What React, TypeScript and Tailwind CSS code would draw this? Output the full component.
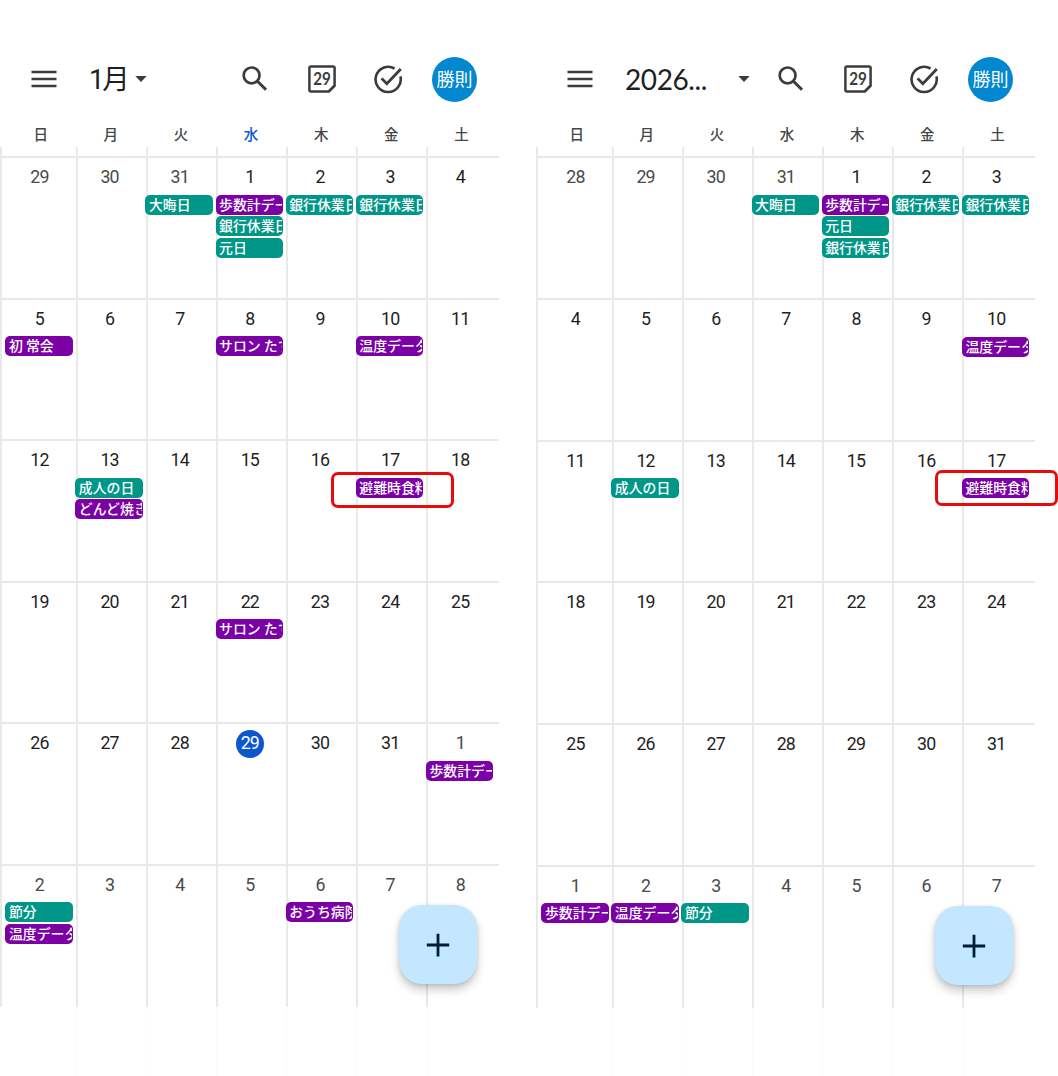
import React from "react";
import clsx from "clsx";

type EventColor = "green" | "purple";

interface CalendarEvent {
  title: string;
  color: EventColor;
}

interface Day {
  date: number;
  muted?: boolean;
  today?: boolean;
  events?: CalendarEvent[];
}

const weekdays = ["日", "月", "火", "水", "木", "金", "土"];

const green = (title: string): CalendarEvent => ({ title, color: "green" });
const purple = (title: string): CalendarEvent => ({ title, color: "purple" });

// Builds the six visible weeks: the tail of the previous month, the month
// itself, then the first days of the next one.
const buildWeeks = (
  leading: number[],
  length: number,
  trailing: number,
  events: Record<number, CalendarEvent[]>,
  today?: number
): Day[][] => {
  const dates = [
    ...leading.map((date) => ({ date, muted: true })),
    ...Array.from({ length }, (_, i) => ({ date: i + 1, muted: false })),
    ...Array.from({ length: trailing }, (_, i) => ({
      date: i + 1,
      muted: true,
    })),
  ];
  const days = dates.map((day, i) => ({
    ...day,
    today: !day.muted && day.date === today,
    events: events[i],
  }));
  return Array.from({ length: 6 }, (_, w) => days.slice(w * 7, w * 7 + 7));
};

// Events are keyed by cell index, counted from the top left
const january2025 = buildWeeks(
  [29, 30, 31],
  31,
  8,
  {
    2: [green("大晦日")],
    3: [purple("歩数計データ"), green("銀行休業日"), green("元日")],
    4: [green("銀行休業日")],
    5: [green("銀行休業日")],
    7: [purple("初 常会")],
    10: [purple("サロン たす")],
    12: [purple("温度データ")],
    15: [green("成人の日"), purple("どんど焼き")],
    19: [purple("避難時食料")],
    24: [purple("サロン たす")],
    34: [purple("歩数計データ")],
    35: [green("節分"), purple("温度データ")],
    39: [purple("おうち病院")],
  },
  29
);

const january2026 = buildWeeks([28, 29, 30, 31], 31, 7, {
  3: [green("大晦日")],
  4: [purple("歩数計データ"), green("元日"), green("銀行休業日")],
  5: [green("銀行休業日")],
  6: [green("銀行休業日")],
  13: [purple("温度データ")],
  15: [green("成人の日")],
  20: [purple("避難時食料")],
  35: [purple("歩数計データ")],
  36: [purple("温度データ")],
  37: [green("節分")],
});

const MenuIcon = () => (
  <svg width="26" height="18" viewBox="0 0 26 18" className="shrink-0">
    <path
      d="M0.5 2h25M0.5 9h25M0.5 16h25"
      stroke="#3c3c3c"
      strokeWidth="2.5"
    />
  </svg>
);

const SearchIcon = () => (
  <svg width="28" height="28" viewBox="0 0 28 28" fill="none">
    <circle cx="10.6" cy="10.4" r="7.9" stroke="#3c3c3c" strokeWidth="2.7" />
    <path d="M16.2 16 25 24.8" stroke="#3c3c3c" strokeWidth="3" />
  </svg>
);

const TodayIcon = () => (
  <svg width="28" height="28" viewBox="0 0 28 28" fill="none">
    <path
      d="M2.8 1.4h22.4a1.4 1.4 0 0 1 1.4 1.4v18l-5.8 5.8H2.8a1.4 1.4 0 0 1-1.4-1.4V2.8a1.4 1.4 0 0 1 1.4-1.4Z"
      stroke="#3c3c3c"
      strokeWidth="2.5"
      strokeLinejoin="round"
    />
    <path d="M26.5 20.2h-1.4l-5 5v1.2h1Z" fill="#3c3c3c" />
    <text
      x="5.2"
      y="19.9"
      textLength="17.6"
      lengthAdjust="spacingAndGlyphs"
      className="fill-[#3c3c3c] font-['Lato',sans-serif] text-[16.6px] font-bold"
    >
      29
    </text>
  </svg>
);

const TaskIcon = () => (
  <svg width="29" height="29" viewBox="0 0 29 29" fill="none">
    <path
      d="M20.6 3.6A12.6 12.6 0 1 0 26.4 11.4"
      stroke="#3c3c3c"
      strokeWidth="2.6"
    />
    <path
      d="M7.6 13.4 12.8 18.8 26.8 4"
      stroke="#3c3c3c"
      strokeWidth="2.8"
    />
  </svg>
);

const EventChip = ({ event }: { event: CalendarEvent }) => (
  <div
    className={clsx(
      "h-5 w-[67.5px] overflow-hidden rounded-[5px] pr-px pl-[3.5px]",
      event.color === "green" ? "bg-[#009688]" : "bg-[#7b00a6]"
    )}
  >
    <div className="overflow-hidden text-[13.9px] leading-[19px] font-medium whitespace-nowrap text-white">
      {event.title}
    </div>
  </div>
);

const DayCell = ({ day, first }: { day: Day; first: boolean }) => (
  <div className={clsx("min-w-0", !first && "border-l-2 border-[#e9e9e9]")}>
    <div
      className={clsx(
        "flex h-[36.6px] items-center justify-center pt-0.5",
        first ? "pr-[2px]" : "pr-[4px]"
      )}
    >
      <span
        className={clsx(
          "flex h-7 w-7 shrink-0 items-center justify-center rounded-full font-['Roboto',sans-serif] text-[17.8px] tracking-[-0.8px]",
          day.today
            ? "bg-[#0b57d0] text-white"
            : day.muted
              ? "text-[#4a4a4a]"
              : "text-[#1f1f1f]"
        )}
      >
        {day.date}
      </span>
    </div>
    <div className={clsx("flex flex-col gap-[1.3px]", !first && "-ml-[2.3px]")}>
      {day.events?.map((event) => (
        <EventChip key={event.title} event={event} />
      ))}
    </div>
  </div>
);

interface CalendarProps {
  title: string;
  wideTitle?: boolean;
  weeks: Day[][];
  activeWeekday?: number;
  rowClass: string;
  fabClass: string;
  highlightClass: string;
}

const Calendar: React.FC<CalendarProps> = ({
  title,
  wideTitle,
  weeks,
  activeWeekday,
  rowClass,
  fabClass,
  highlightClass,
}) => {
  return (
    <section className="relative flex h-[1076px] w-[499px] shrink-0 flex-col pt-[55px]">
      <header className="flex h-12 items-center pl-[31px]">
        <MenuIcon />
        <div
          className={clsx(
            "ml-8 flex items-center justify-between",
            wideTitle ? "w-[125px]" : "w-[58px]"
          )}
        >
          <h1
            className={clsx(
              "leading-none whitespace-nowrap text-[#1f1f1f]",
              wideTitle
                ? "font-['Lato',sans-serif] text-[28px] tracking-[-0.4px]"
                : "pt-px font-['Roboto','Noto_Sans_CJK_JP',sans-serif] text-[27.5px] tracking-[-2.2px]"
            )}
          >
            {title}
          </h1>
          <svg width="12" height="6" viewBox="0 0 12 6" className="shrink-0">
            <path d="M0.3 0h11.4L6 6Z" fill="#3c3c3c" />
          </svg>
        </div>
        <div className="mr-[22px] ml-auto flex items-center">
          <SearchIcon />
          <div className="ml-[39px]">
            <TodayIcon />
          </div>
          <div className="ml-[38px]">
            <TaskIcon />
          </div>
          <div className="ml-[29px] flex h-[45px] w-[45px] items-center justify-center rounded-full bg-[#0288d1] pb-0.5 text-[18px] whitespace-nowrap text-white">
            勝則
          </div>
        </div>
      </header>

      <div className="grid h-11 grid-cols-[repeat(7,70.15px)] pl-[5.6px] text-center text-[14.5px] leading-[61px] font-medium">
        {weekdays.map((weekday, i) => (
          <div
            key={weekday}
            className={i === activeWeekday ? "text-[#0b57d0]" : "text-[#444746]"}
          >
            {weekday}
          </div>
        ))}
      </div>

      <div className="w-[499px] border-l-2 border-[#e9e9e9]">
        <div className="grid h-[9.4px] grid-cols-[repeat(7,70.15px)] pl-[3.4px]">
          {weekdays.map((weekday, i) => (
            <div
              key={weekday}
              className={clsx(i > 0 && "border-l-2 border-[#e9e9e9]")}
            />
          ))}
        </div>
        {weeks.map((week, w) => (
          <div
            key={w}
            className={clsx(
              "grid grid-cols-[repeat(7,70.15px)] border-t-2 border-[#e9e9e9] pl-[3.4px]",
              rowClass
            )}
          >
            {week.map((day, i) => (
              <DayCell key={i} day={day} first={i === 0} />
            ))}
          </div>
        ))}
      </div>

      {/* faded grid under the navigation area */}
      <div className="grid min-h-0 flex-1 grid-cols-[repeat(7,70.15px)] pl-[5.7px]">
        {weekdays.map((weekday, i) => (
          <div
            key={weekday}
            className={clsx(i > 0 && "border-l border-[#fbfbfb]")}
          />
        ))}
      </div>

      <button
        aria-label="追加"
        className={clsx(
          "absolute left-[399px] flex h-[79px] w-[78px] items-center justify-center rounded-[23px] bg-[#c2e7ff] shadow-[0_6px_10px_rgba(0,0,0,0.2),0_1px_4px_rgba(0,0,0,0.12)]",
          fabClass
        )}
      >
        <svg width="24" height="24" viewBox="0 0 24 24">
          <path d="M12 0.8v22.6M0.8 12h22.4" stroke="#001d35" strokeWidth="2.8" />
        </svg>
      </button>
      <div
        className={clsx(
          "absolute h-9 w-[123px] rounded-[7px] border-[3px] border-[#e60c0c]",
          highlightClass
        )}
      />
    </section>
  );
};

const App: React.FC = () => {
  return (
    <main
      lang="ja"
      className="flex h-[1076px] w-[1058px] gap-[37px] overflow-hidden bg-white font-['Noto_Sans_CJK_JP',sans-serif]"
    >
      <Calendar
        title="1月"
        weeks={january2025}
        activeWeekday={3}
        rowClass="h-[141.5px] last:h-[143.4px]"
        fabClass="top-[905px]"
        highlightClass="top-[472px] left-[331px]"
      />
      <Calendar
        title="2026..."
        wideTitle
        weeks={january2026}
        rowClass="h-[141.7px] last:h-[143px]"
        fabClass="top-[906px]"
        highlightClass="top-[470px] left-[399px]"
      />
    </main>
  );
};

export default App;
